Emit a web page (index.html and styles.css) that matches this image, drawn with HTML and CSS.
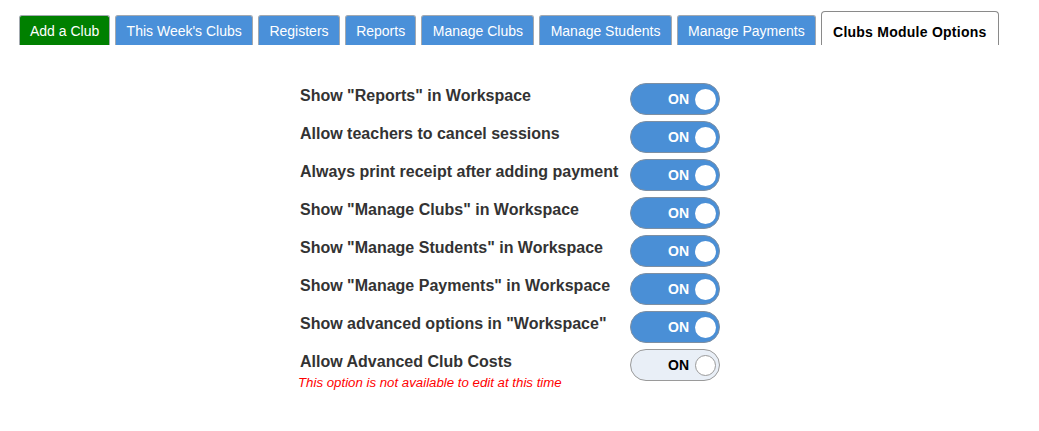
FILE: index.html
```html
<!DOCTYPE html>
<html>
<head>
<meta charset="utf-8">
<title>Clubs Module Options</title>
<link rel="stylesheet" href="styles.css">
</head>
<body>
<div class="tabs">
  <div class="tab tab-green">Add a Club</div>
  <div class="tab">This Week's Clubs</div>
  <div class="tab">Registers</div>
  <div class="tab">Reports</div>
  <div class="tab">Manage Clubs</div>
  <div class="tab">Manage Students</div>
  <div class="tab">Manage Payments</div>
  <div class="tab tab-active">Clubs Module Options</div>
</div>
<div class="options">
  <div class="row">
    <div class="label">Show "Reports" in Workspace</div>
    <div class="toggle"><span class="on">ON</span><span class="knob"></span></div>
  </div>
  <div class="row">
    <div class="label">Allow teachers to cancel sessions</div>
    <div class="toggle"><span class="on">ON</span><span class="knob"></span></div>
  </div>
  <div class="row">
    <div class="label">Always print receipt after adding payment</div>
    <div class="toggle"><span class="on">ON</span><span class="knob"></span></div>
  </div>
  <div class="row">
    <div class="label">Show "Manage Clubs" in Workspace</div>
    <div class="toggle"><span class="on">ON</span><span class="knob"></span></div>
  </div>
  <div class="row">
    <div class="label">Show "Manage Students" in Workspace</div>
    <div class="toggle"><span class="on">ON</span><span class="knob"></span></div>
  </div>
  <div class="row">
    <div class="label">Show "Manage Payments" in Workspace</div>
    <div class="toggle"><span class="on">ON</span><span class="knob"></span></div>
  </div>
  <div class="row">
    <div class="label">Show advanced options in "Workspace"</div>
    <div class="toggle"><span class="on">ON</span><span class="knob"></span></div>
  </div>
  <div class="row">
    <div class="label">Allow Advanced Club Costs
      <div class="note">This option is not available to edit at this time</div>
    </div>
    <div class="toggle toggle-disabled"><span class="on">ON</span><span class="knob"></span></div>
  </div>
</div>
</body>
</html>
```

FILE: styles.css
```css
html, body {
  margin: 0;
  padding: 0;
  background: #fff;
  font-family: "Liberation Sans", Arial, sans-serif;
}

.tabs {
  display: flex;
  align-items: flex-end;
  gap: 5px;
  padding: 11px 0 0 19px;
  height: 34px;
}

.tab {
  box-sizing: border-box;
  height: 30px;
  padding: 5px 10.3px 0;
  line-height: 20px;
  font-size: 14px;
  color: #fff;
  background: #4a90d9;
  border: 1px solid #a3a9b0;
  border-bottom: none;
  border-radius: 3px 3px 0 0;
  white-space: nowrap;
}

.tab-green {
  background: #008000;
  padding: 5px 10px 0;
}

.tab-active {
  height: 34px;
  padding: 10px 11px 0;
  letter-spacing: 0.25px;
  background: #fff;
  color: #000;
  font-weight: bold;
  border-color: #8a8a8a;
  border-radius: 4px 4px 0 0;
}

.options {
  margin: 38px 0 0 300px;
  width: 420px;
}

.row {
  display: grid;
  grid-template-columns: 330px 90px;
  min-height: 38px;
}

.label {
  padding-top: 4px;
  font-size: 16px;
  line-height: 18px;
  font-weight: bold;
  color: #333;
}

.note {
  margin: 4px 0 0 -2px;
  font-size: 13.25px;
  line-height: 15px;
  font-weight: normal;
  font-style: italic;
  color: #f00;
}

.toggle {
  box-sizing: border-box;
  width: 90px;
  height: 32px;
  border-radius: 16px;
  background: #4a8fd6;
  border: 1px solid #7d8fa3;
  display: flex;
  align-items: center;
  justify-content: flex-end;
  padding-right: 3px;
}

.on {
  font-size: 14px;
  font-weight: bold;
  color: #fff;
  line-height: 16px;
}

.knob {
  width: 21px;
  height: 21px;
  margin-left: 6px;
  border-radius: 50%;
  background: #fff;
  box-sizing: border-box;
}

.toggle-disabled {
  background: #e9eff7;
  border-color: #9a9a9a;
}

.toggle-disabled .on {
  color: #000;
}

.toggle-disabled .knob {
  border: 1px solid #9a9a9a;
}
```
